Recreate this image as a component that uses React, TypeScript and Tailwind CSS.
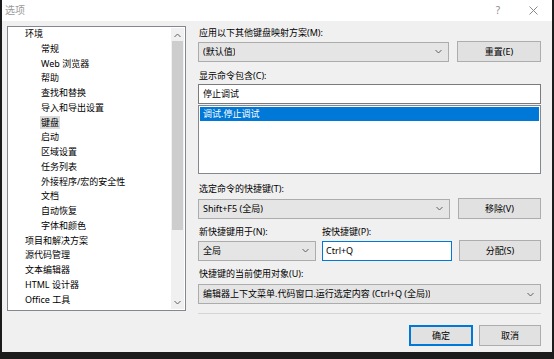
const font = { fontFamily: '"Noto Sans", "Noto Sans CJK SC", sans-serif' };

const TREE = [
  { label: "环境", level: 0 },
  { label: "常规", level: 1 },
  { label: "Web 浏览器", level: 1 },
  { label: "帮助", level: 1 },
  { label: "查找和替换", level: 1 },
  { label: "导入和导出设置", level: 1 },
  { label: "键盘", level: 1, selected: true },
  { label: "启动", level: 1 },
  { label: "区域设置", level: 1 },
  { label: "任务列表", level: 1 },
  { label: "外接程序/宏的安全性", level: 1 },
  { label: "文档", level: 1 },
  { label: "自动恢复", level: 1 },
  { label: "字体和颜色", level: 1 },
  { label: "项目和解决方案", level: 0 },
  { label: "源代码管理", level: 0 },
  { label: "文本编辑器", level: 0 },
  { label: "HTML 设计器", level: 0 },
  { label: "Office 工具", level: 0 },
];

const Chevron = ({ up = false }: { up?: boolean }) => (
  <svg width="7" height="5" viewBox="0 0 7 5" className={up ? "rotate-180" : ""}>
    <path d="M0.5 1 L3.5 4 L6.5 1" fill="none" stroke="#606060" strokeWidth="1" />
  </svg>
);

const Combo = ({ text, className }: { text: string; className: string }) => (
  <div
    className={`flex items-center justify-between h-[20px] pl-[4px] pr-[6px] bg-[#e5e5e5] border border-[#acacac] ${className}`}
  >
    <span className="truncate">{text}</span>
    <Chevron />
  </div>
);

const Button = ({ text, primary = false }: { text: string; primary?: boolean }) => (
  <div
    className={`flex items-center justify-center h-[21px] bg-[#e1e1e1] border ${
      primary ? "border-[#0078d7] border-2" : "border-[#adadad]"
    }`}
  >
    {text}
  </div>
);

const Label = ({ text, className = "" }: { text: string; className?: string }) => (
  <div className={`h-[14px] leading-[14px] pl-[1px] ${className}`}>{text}</div>
);

export default function App() {
  return (
    <div className="w-[554px] h-[359px] bg-[#1b1b1b] overflow-hidden" style={font}>
      <div className="ml-[2px] w-[550px] h-[352px] bg-[#f0f0f0] flex flex-col text-[9px] text-black">
        {/* Title bar */}
        <div className="h-[21px] bg-white flex items-center pl-[3px] pr-[14px]">
          <span className="text-[#9a9a9a] text-[10px]">选项</span>
          <div className="flex-1" />
          <span className="text-[#8a8a8a] text-[10px] mr-[29px]">?</span>
          <svg width="9" height="9" viewBox="0 0 9 9">
            <path d="M0.5 0.5 L8.5 8.5 M8.5 0.5 L0.5 8.5" stroke="#8a8a8a" strokeWidth="1" />
          </svg>
        </div>

        <div className="flex pt-[5px] pl-[5px]">
          {/* Tree */}
          <div className="w-[179px] h-[285px] bg-white border border-[#828790] flex">
            <div className="flex-1 pt-[0px]">
              {TREE.map((item, i) => (
                <div
                  key={i}
                  className={`h-[14.78px] leading-[14.78px] whitespace-nowrap ${
                    item.level === 0 ? "pl-[17px]" : "pl-[33px]"
                  }`}
                >
                  <span className={item.selected ? "bg-[#dadada] px-[1px] -mx-[1px]" : ""}>{item.label}</span>
                </div>
              ))}
            </div>
            <div className="w-[13px] flex flex-col items-center bg-[#f0f0f0] mr-[1px] my-[1px]">
              <div className="h-[12px] flex items-center pt-[2px]">
                <Chevron up />
              </div>
              <div className="w-[11px] h-[189px] bg-[#cdcdcd] mt-[1px]" />
              <div className="flex-1" />
              <div className="h-[14px] flex items-center">
                <Chevron />
              </div>
            </div>
          </div>

          {/* Right pane */}
          <div className="ml-[12px] w-[343px] flex flex-col">
            <Label text="应用以下其他键盘映射方案(M):" />
            <div className="flex items-center gap-[8px] mt-[1px]">
              <Combo text="(默认值)" className="w-[251px]" />
              <div className="flex-1">
                <Button text="重置(E)" />
              </div>
            </div>

            <Label text="显示命令包含(C):" className="mt-[7px]" />
            <div className="h-[20px] mt-[1px] bg-white border border-[#7a7a7a] flex items-center pl-[4px]">
              停止调试
            </div>
            <div className="h-[69px] mt-[1px] bg-white border border-[#828790] p-[1px]">
              <div className="h-[14px] leading-[14px] bg-[#0078d7] text-white pl-[3px]">调试.停止调试</div>
            </div>

            <Label text="选定命令的快捷键(T):" className="mt-[8px]" />
            <div className="flex items-center gap-[8px] mt-[2px]">
              <Combo text="Shift+F5 (全局)" className="w-[252px]" />
              <div className="flex-1">
                <Button text="移除(V)" />
              </div>
            </div>

            <div className="flex mt-[6px]">
              <Label text="新快捷键用于(N):" className="w-[123px]" />
              <Label text="按快捷键(P):" />
            </div>
            <div className="flex items-center mt-[1px]">
              <Combo text="全局" className="w-[118px]" />
              <div className="w-[130px] h-[20px] ml-[6px] bg-white border border-[#0078d7] flex items-center pl-[3px]">
                Ctrl+Q
              </div>
              <div className="flex-1 ml-[7px]">
                <Button text="分配(S)" />
              </div>
            </div>

            <Label text="快捷键的当前使用对象(U):" className="mt-[6px]" />
            <Combo
              text="编辑器上下文菜单.代码窗口.运行选定内容 (Ctrl+Q (全局))"
              className="w-full mt-[3px]"
            />

            <div className="h-[1px] bg-[#d5d5d5] mt-[9px]" />

            <div className="flex justify-end gap-[6px] mt-[11px]">
              <div className="w-[64px]">
                <Button text="确定" primary />
              </div>
              <div className="w-[62px]">
                <Button text="取消" />
              </div>
            </div>
          </div>
        </div>
      </div>
    </div>
  );
}
